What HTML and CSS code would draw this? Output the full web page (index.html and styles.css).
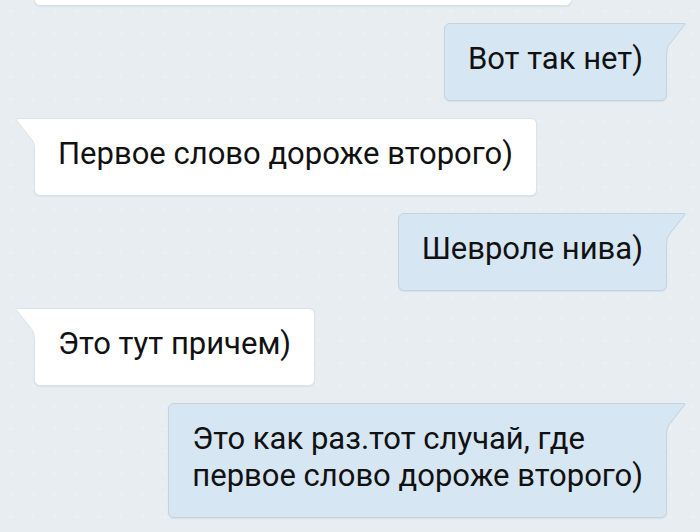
FILE: index.html
```html
<!DOCTYPE html>
<html>
<head>
  <meta charset="UTF-8">
  <title>Диалог</title>
  <link rel="stylesheet" href="styles.css">
</head>
<body>
  <div class="chat">
    <div class="msg in"><div class="bubble cut"></div></div>

    <div class="msg out">
      <div class="bubble">Вот так нет)
        <svg class="tail" width="21" height="32" viewBox="0 0 21 32"><path class="fill" d="M0 0H19.4Q21.2 0 20.1 1.6L4 22Q2 25 2 32H0Z"/><path class="edge" d="M0 0.5H19.3Q20.6 0.6 19.7 1.9L3.6 22.3Q1.5 25.2 1.5 32"/></svg>
      </div>
    </div>

    <div class="msg in">
      <div class="bubble">Первое слово дороже второго)
        <svg class="tail" width="21" height="32" viewBox="0 0 21 32"><path class="fill" d="M0 0H19.4Q21.2 0 20.1 1.6L4 22Q2 25 2 32H0Z"/><path class="edge" d="M0 0.5H19.3Q20.6 0.6 19.7 1.9L3.6 22.3Q1.5 25.2 1.5 32"/></svg>
      </div>
    </div>

    <div class="msg out">
      <div class="bubble">Шевроле нива)
        <svg class="tail" width="21" height="32" viewBox="0 0 21 32"><path class="fill" d="M0 0H19.4Q21.2 0 20.1 1.6L4 22Q2 25 2 32H0Z"/><path class="edge" d="M0 0.5H19.3Q20.6 0.6 19.7 1.9L3.6 22.3Q1.5 25.2 1.5 32"/></svg>
      </div>
    </div>

    <div class="msg in">
      <div class="bubble">Это тут причем)
        <svg class="tail" width="21" height="32" viewBox="0 0 21 32"><path class="fill" d="M0 0H19.4Q21.2 0 20.1 1.6L4 22Q2 25 2 32H0Z"/><path class="edge" d="M0 0.5H19.3Q20.6 0.6 19.7 1.9L3.6 22.3Q1.5 25.2 1.5 32"/></svg>
      </div>
    </div>

    <div class="msg out">
      <div class="bubble">Это как раз.тот случай, где<br>первое слово дороже второго)
        <svg class="tail" width="21" height="32" viewBox="0 0 21 32"><path class="fill" d="M0 0H19.4Q21.2 0 20.1 1.6L4 22Q2 25 2 32H0Z"/><path class="edge" d="M0 0.5H19.3Q20.6 0.6 19.7 1.9L3.6 22.3Q1.5 25.2 1.5 32"/></svg>
      </div>
    </div>
  </div>
</body>
</html>
```

FILE: styles.css
```css
body {
  margin: 0;
  height: 532px;
  overflow: hidden;
  background-color: #e7edf1;
  background-image: radial-gradient(circle, rgba(255, 255, 255, 0.18) 1.5px, transparent 2px);
  background-size: 22px 22px;
  font-family: Roboto, "Noto Sans", sans-serif;
}
.chat {
  display: flex;
  flex-direction: column;
  gap: 17px;
  padding: 0 33px 0 34px;
}
.msg {
  display: flex;
}
.msg.out {
  justify-content: flex-end;
}
.bubble {
  position: relative;
  padding: 16px 23px 23px;
  border: 1px solid #dbe2e8;
  border-radius: 6px;
  background: #ffffff;
  box-shadow: 0 1px 1px rgba(60, 80, 100, 0.08);
  color: #111;
  font-size: 31px;
  line-height: 37px;
  white-space: nowrap;
}
.out .bubble {
  background: #d7e6f3;
  border-color: #c2d3e1;
  border-top-right-radius: 0;
}
.in .bubble {
  border-top-left-radius: 0;
}
.bubble.cut {
  width: 536px;
  height: 5px;
  padding: 0;
  border-top: 0;
  border-radius: 0 0 6px 6px;
}
.tail {
  position: absolute;
  top: -1px;
  display: block;
}
.out .tail {
  right: -20px;
}
.in .tail {
  left: -20px;
  transform: scaleX(-1);
}
.tail .fill {
  fill: #ffffff;
}
.out .tail .fill {
  fill: #d7e6f3;
}
.tail .edge {
  fill: none;
  stroke: #dbe2e8;
  stroke-width: 1;
}
.out .tail .edge {
  stroke: #c2d3e1;
}
```
